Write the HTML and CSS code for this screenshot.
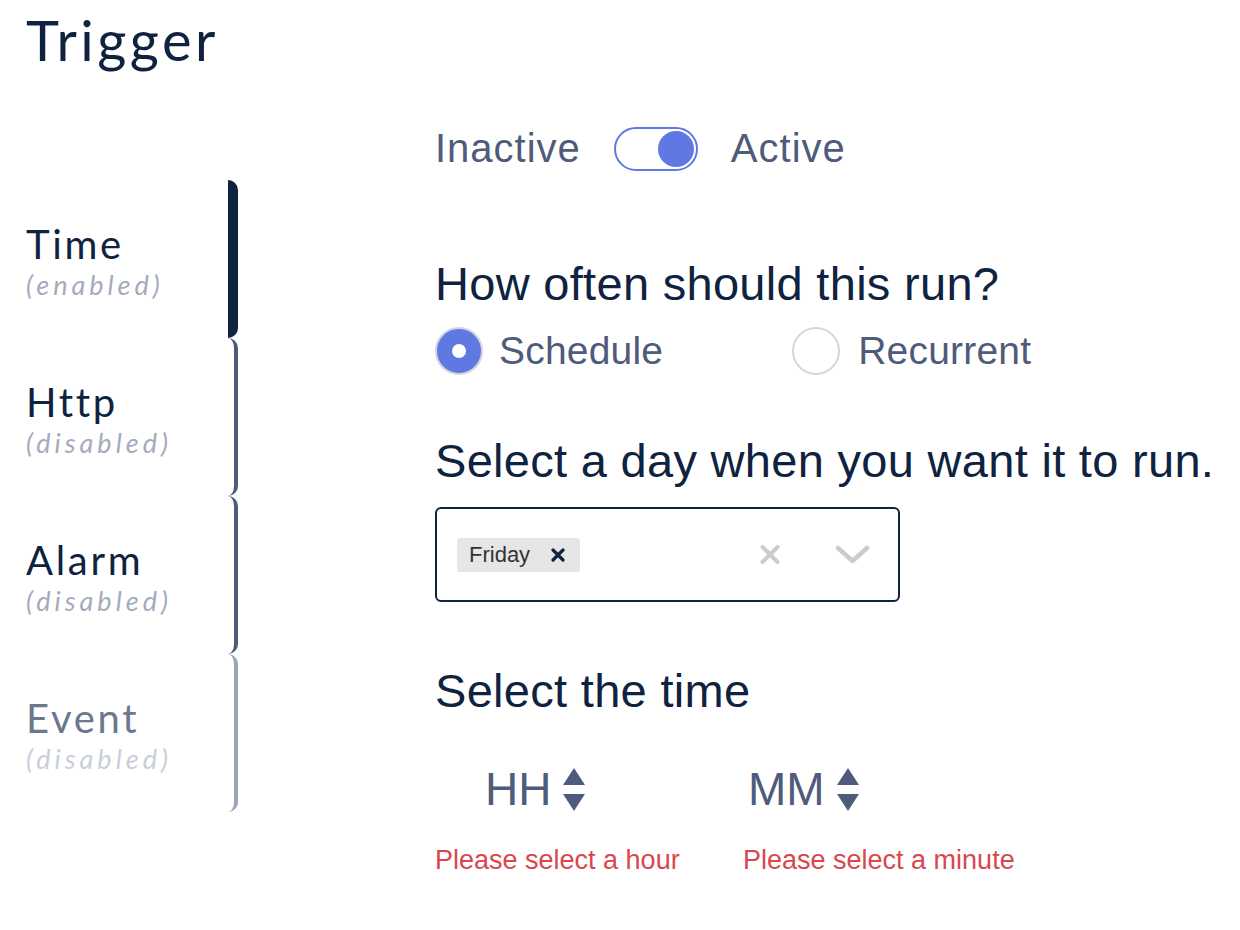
FILE: index.html
```html
<!DOCTYPE html>
<html lang="en">
<head>
  <meta charset="UTF-8">
  <meta name="viewport" content="width=device-width, initial-scale=1.0">
  <title>Trigger</title>
  <link rel="stylesheet" href="styles.css">
</head>
<body>
  <h1 class="page-title">Trigger</h1>

  <div class="trigger">
    <nav class="tabs">
      <div class="tab tab-active">
        <span class="tab-name">Time</span>
        <span class="tab-state">(enabled)</span>
      </div>
      <div class="tab">
        <span class="tab-name">Http</span>
        <span class="tab-state">(disabled)</span>
      </div>
      <div class="tab">
        <span class="tab-name">Alarm</span>
        <span class="tab-state">(disabled)</span>
      </div>
      <div class="tab tab-muted">
        <span class="tab-name">Event</span>
        <span class="tab-state">(disabled)</span>
      </div>
    </nav>

    <section class="panel">
      <div class="status">
        <span>Inactive</span>
        <span class="switch"><span class="switch-knob"></span></span>
        <span>Active</span>
      </div>

      <h2 class="question question-often">How often should this run?</h2>
      <div class="radios">
        <label class="radio radio-checked"><span class="radio-dot"></span>Schedule</label>
        <label class="radio"><span class="radio-dot"></span>Recurrent</label>
      </div>

      <h2 class="question question-day">Select a day when you want it to run.</h2>
      <div class="select">
        <span class="tag">
          Friday
          <svg class="tag-remove" width="14" height="14" viewBox="0 0 14 14">
            <path d="M2 2L12 12M12 2L2 12" stroke="#0f2340" stroke-width="3.2" stroke-linecap="round"/>
          </svg>
        </span>
        <svg class="select-clear" width="20" height="19" viewBox="0 0 20 19">
          <path d="M2.5 2L17.5 17M17.5 2L2.5 17" stroke="#cccccc" stroke-width="4" stroke-linecap="round"/>
        </svg>
        <svg class="select-arrow" width="35" height="20" viewBox="0 0 35 20">
          <path d="M3 3L17.5 16L32 3" fill="none" stroke="#cccccc" stroke-width="4.5" stroke-linecap="round" stroke-linejoin="round"/>
        </svg>
      </div>

      <h2 class="question question-time">Select the time</h2>
      <div class="time">
        <div class="time-field time-hour">
          <div class="spinner">
            HH
            <svg width="22" height="43" viewBox="0 0 22 43">
              <path d="M0 17L11 0L22 17Z M0 26L22 26L11 43Z" fill="#4f5b7a"/>
            </svg>
          </div>
          <p class="error">Please select a hour</p>
        </div>
        <div class="time-field time-minute">
          <div class="spinner">
            MM
            <svg width="22" height="43" viewBox="0 0 22 43">
              <path d="M0 17L11 0L22 17Z M0 26L22 26L11 43Z" fill="#4f5b7a"/>
            </svg>
          </div>
          <p class="error">Please select a minute</p>
        </div>
      </div>
    </section>
  </div>
</body>
</html>
```

FILE: styles.css
```css
body {
  margin: 0;
  background: #fff;
  font-family: "Liberation Sans", Arial, sans-serif;
  color: #0f2340;
}

.page-title {
  margin: 0;
  padding-left: 26px;
  font: 400 56px/80px Lato, sans-serif;
  letter-spacing: 3.5px;
  color: #0f2340;
}

.trigger {
  display: flex;
}

/* left tab rail */
.tabs {
  flex-shrink: 0;
  width: 212px;
  margin-left: 26px;
  padding-top: 100px;
  font-family: Lato, sans-serif;
}

.tab {
  box-sizing: border-box;
  height: 158px;
  padding-top: 40px;
  display: flex;
  flex-direction: column;
  border-right: 4px solid #4f5b7a;
  border-radius: 0 10px 10px 0;
}

.tab-active {
  border-right: 10px solid #0f2340;
}

.tab-name {
  font-size: 40px;
  line-height: 48px;
  letter-spacing: 2.7px;
  color: #0f2340;
}

.tab-state {
  font-size: 27px;
  line-height: 33px;
  font-style: italic;
  letter-spacing: 4px;
  color: #a3abbd;
}

.tab-muted {
  border-right-color: #9ba4b9;
}

.tab-muted .tab-name {
  color: #6b788f;
}

.tab-muted .tab-state {
  color: #c9ced9;
}

/* right panel */
.panel {
  margin-left: 197px;
}

.status {
  display: flex;
  align-items: center;
  margin-top: 46px;
  font-size: 40px;
  letter-spacing: 1px;
  color: #4f5b7a;
}

.switch {
  box-sizing: border-box;
  width: 84px;
  height: 44px;
  margin: 0 33px 0 33px;
  padding-right: 2px;
  display: flex;
  align-items: center;
  justify-content: flex-end;
  border: 2px solid #5f78e2;
  border-radius: 22px;
}

.switch-knob {
  width: 36px;
  height: 36px;
  border-radius: 50%;
  background: #5f78e2;
}

.question {
  margin: 0;
  font-size: 47px;
  line-height: 56px;
  font-weight: 400;
  letter-spacing: 0.3px;
  color: #0f2340;
}

.question-often {
  margin-top: 85px;
}

.question-day {
  margin-top: 58px;
}

.question-time {
  margin-top: 61px;
}

.radios {
  display: flex;
  align-items: center;
  margin-top: 15px;
  font-size: 39px;
  letter-spacing: 0.2px;
  color: #4f5b7a;
}

.radio {
  display: flex;
  align-items: center;
  gap: 16px;
}

.radio + .radio {
  margin-left: 129px;
  gap: 18px;
}

.radio-dot {
  box-sizing: border-box;
  width: 48px;
  height: 48px;
  display: flex;
  align-items: center;
  justify-content: center;
  border: 2px solid #d3d8e0;
  border-radius: 50%;
  background: #fff;
}

.radio-checked .radio-dot {
  background: #5f78e2;
  border-color: #cfd5df;
}

.radio-checked .radio-dot::after {
  content: "";
  width: 14px;
  height: 14px;
  border-radius: 50%;
  background: #fff;
}

.select {
  box-sizing: border-box;
  width: 465px;
  height: 95px;
  margin-top: 18px;
  padding: 0 28px 0 20px;
  display: flex;
  align-items: center;
  border: 2px solid #0f2340;
  border-radius: 6px;
}

.tag {
  height: 34px;
  padding: 0 15px 0 12px;
  display: flex;
  align-items: center;
  gap: 21px;
  border-radius: 3px;
  background: #e6e6e6;
  font-size: 22px;
  color: #333;
}

.select-clear {
  margin-left: auto;
}

.select-arrow {
  margin-left: 55px;
}

.time {
  display: flex;
  margin-top: 46px;
}

.time-field {
  width: 308px;
}

.spinner {
  height: 48px;
  display: flex;
  align-items: center;
  gap: 12px;
  font-size: 46px;
  color: #4f5b7a;
}

.time-hour .spinner {
  padding-left: 50px;
}

.time-minute .spinner {
  padding-left: 5px;
}

.error {
  margin: 31px 0 0;
  font-size: 27px;
  line-height: 32px;
  color: #d9474e;
}
```
